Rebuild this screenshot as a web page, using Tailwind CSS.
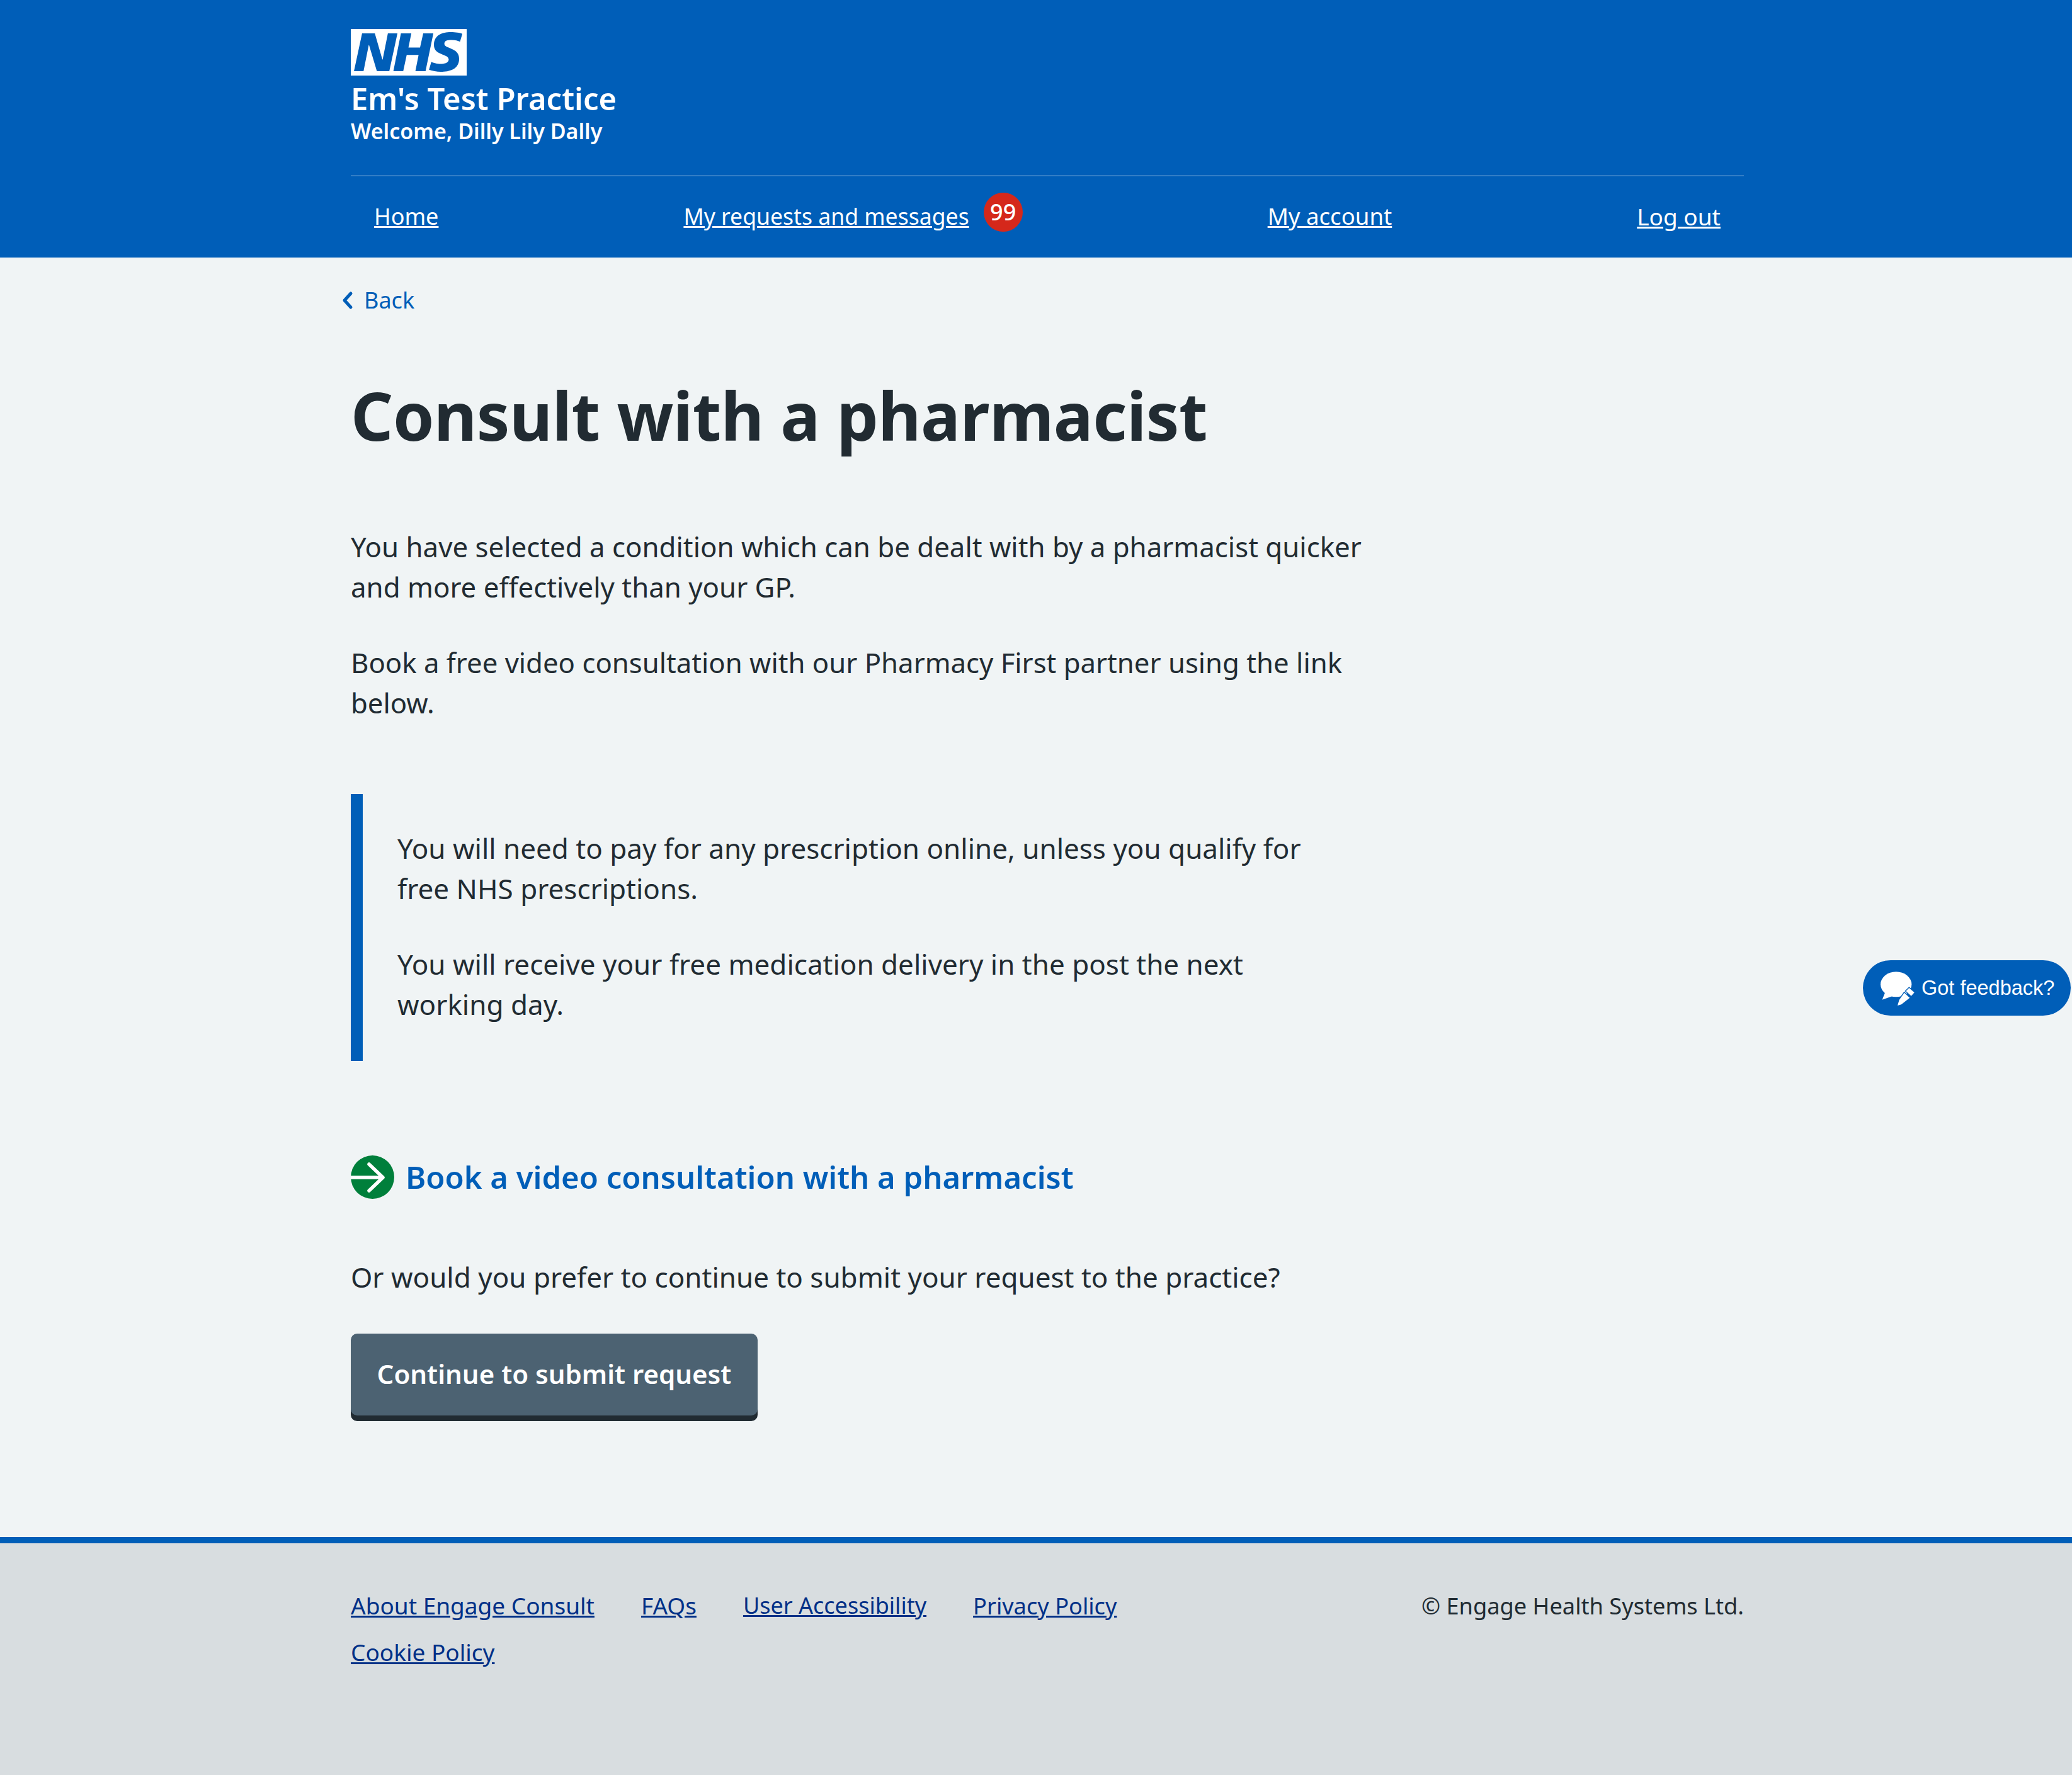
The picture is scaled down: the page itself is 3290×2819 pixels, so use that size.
<!doctype html>
<html lang="en">
<head>
<meta charset="utf-8">
<title>Consult with a pharmacist</title>
<script src="https://cdn.jsdelivr.net/npm/@tailwindcss/browser@4"></script>
</head>
<body class="bg-[#f0f4f5] text-[#212b32] font-['Noto_Sans',sans-serif] w-[3290px] h-[2819px] relative overflow-hidden flex flex-col">
<header class="bg-[#005eb8] h-[409px] shrink-0 text-white">
  <div class="w-[2212px] ml-[557px] h-full flex flex-col">
    <div class="h-[280px] pt-[46px] border-b-2 border-white/20 flex flex-col">
      <svg class="w-[184px] h-[74px]" viewBox="0 0 40 16" preserveAspectRatio="none"><path fill="#fff" d="M0 0h40v16H0z"/><path fill="#005eb8" d="M3.9 1.5h4.4l2.6 9h.1l1.8-9h3.3l-2.8 13H9l-2.7-9h-.1l-1.8 9H1.1M17.3 1.5h3.6l-1 4.9h4L25 1.5h3.5l-2.7 13h-3.5l1.1-5.6h-4.1l-1.2 5.6h-3.4M37.7 4.4c-.7-.3-1.6-.6-2.9-.6-1.4 0-2.5.2-2.500 1.300 0 1.800 5.100 1.200 5.100 5.100 0 3.600-3.300 4.500-6.400 4.500-1.300 0-2.900-.3-4-.7l.8-2.700c.7.4 2.100.7 3.200.7s2.800-.2 2.800-1.500c0-2.100-5.100-1.300-5.100-5 0-3.400 2.900-4.400 5.800-4.400 1.600 0 3.100.2 4 .6"/></svg>
      <div class="text-[49px] leading-[64px] font-semibold mt-[4px]">Em's Test Practice</div>
      <div class="text-[34px] leading-[46px] font-semibold -mt-[3px]">Welcome, Dilly Lily Dally</div>
    </div>
    <nav class="flex-1 flex items-center justify-between px-[37px] text-[36px] pb-[2px]">
      <a class="underline" href="#">Home</a>
      <span class="flex items-center gap-[23px]"><a class="underline text-[35.600px]" href="#">My requests and messages</a><span class="w-[62px] h-[62px] rounded-full bg-[#d5281b] flex items-center justify-center text-[36px] font-medium -mt-[12px]">99</span></span>
      <a class="underline text-[36.600px]" href="#">My account</a>
      <a class="underline text-[37px]" href="#">Log out</a>
    </nav>
  </div>
</header>
<main class="flex-1 w-[2212px] ml-[557px]">
  <a href="#" class="flex items-center gap-[16px] -ml-[15px] mt-[44px] text-[36px] leading-[48px] text-[#005eb8]">
    <svg class="w-[20px] h-[30px]" viewBox="0 0 20 30" fill="none" stroke="#005eb8" stroke-width="5" stroke-linecap="round" stroke-linejoin="round"><path d="M15 4 5 15l10 11"/></svg>Back</a>
  <h1 class="text-[105px] leading-[130px] font-bold mt-[94px] -tracking-[0.5px]">Consult with a pharmacist</h1>
  <div class="w-[1640px] text-[43.800px] leading-[64px] mt-[111px]">
    <p>You have selected a condition which can be dealt with by a pharmacist quicker and more effectively than your GP.</p>
    <p class="mt-[56px] text-[43.700px]">Book a free video consultation with our Pharmacy First partner using the link below.</p>
  </div>
  <div class="w-[1560px] mt-[113px] h-[424px] border-l-[19px] border-[#005eb8] pl-[55px] pt-[54px] text-[44px] leading-[64px]">
    <p>You will need to pay for any prescription online, unless you qualify for free NHS prescriptions.</p>
    <p class="mt-[56px]">You will receive your free medication delivery in the post the next working day.</p>
  </div>
  <a href="#" class="flex items-center gap-[18px] mt-[150px] text-[49px] leading-[69px] font-semibold text-[#005eb8]">
    <svg class="w-[69px] h-[69px] shrink-0" viewBox="0 0 69 69"><circle cx="34.500" cy="34.500" r="34.500" fill="#007f3b"/><path d="M0 35h50M29 14l22 21-22 21" fill="none" stroke="#fff" stroke-width="5.500" stroke-linecap="round" stroke-linejoin="round"/></svg>
    Book a video consultation with a pharmacist</a>
  <p class="text-[44px] leading-[64px] mt-[92px]">Or would you prefer to continue to submit your request to the practice?</p>
  <button class="mt-[58px] w-[646px] h-[130px] pb-[3px] mb-[9px] bg-[#4c6272] rounded-[10px] shadow-[0_9px_0_#212b32] text-white text-[42px] font-semibold block">Continue to submit request</button>
</main>
<footer class="border-t-[10px] border-[#005eb8] bg-[#d8dde0] h-[378px] shrink-0">
  <div class="w-[2212px] ml-[557px] flex justify-between pt-[62px] text-[37px] leading-[74px]">
    <div class="text-[#003087] w-[1500px] flex flex-wrap gap-x-[74px]">
      <a class="underline" href="#">About Engage Consult</a>
      <a class="underline" href="#">FAQs</a>
      <a class="underline text-[36px]" href="#">User Accessibility</a>
      <a class="underline text-[36.200px]" href="#">Privacy Policy</a>
      <a class="underline" href="#">Cookie Policy</a>
    </div>
    <div class="text-[36.200px]">© Engage Health Systems Ltd.</div>
  </div>
</footer>
<a href="#" class="absolute left-[2958px] top-[1525px] w-[330px] h-[88px] rounded-full bg-[#005eb8] text-white flex items-center pl-[93px] text-[32.500px] font-['Liberation_Sans',sans-serif]">
  <svg class="absolute left-[25px] top-[15px] w-[60px] h-[60px]" viewBox="190 120 180 180"><ellipse cx="273" cy="190" rx="74" ry="60" fill="#fff"/><path d="M222 225 207 263 258 245z" fill="#fff"/><path d="M335 207 360 229 345 245 320 222zM312 230 338 254 298 286 280 291 288 264z" fill="#fff" stroke="#005eb8" stroke-width="8" paint-order="stroke"/></svg>
  Got feedback?</a>
</body>
</html>
